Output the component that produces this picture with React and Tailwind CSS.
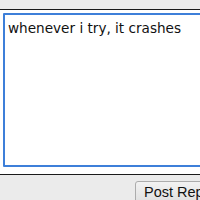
import React from 'react';

const App = () => {
    return (
        <div className="w-[200px] h-[200px] overflow-hidden bg-[#ebebeb] flex flex-col">
            <div className="h-[9px] shrink-0 bg-[#ebebeb] border-b border-[#1a1a1a] box-content" />
            <div className="h-[161px] shrink-0 bg-white border-b border-[#1a1a1a] box-content pt-[3px] pl-[3px]">
                <textarea
                    defaultValue="whenever i try, it crashes"
                    className="block w-[260px] h-[154px] resize-none border-2 border-[#3d7fd9] rounded-[1px] px-[3px] pt-[5px] text-[13.6px] leading-[17px] text-[#111] outline-none"
                    style={{ fontFamily: '"DejaVu Sans", Verdana, sans-serif' }}
                />
            </div>
            <div className="pt-[4px] pl-[135px] whitespace-nowrap">
                <button
                    className="h-[22px] w-[90px] text-left pl-[8px] border border-[#acacac] rounded-[3px] bg-gradient-to-b from-[#f2f2f2] to-[#e0e0e0] text-[14.5px] text-[#111] leading-none"
                    style={{ fontFamily: '"Liberation Sans", Arial, sans-serif' }}
                >
                    Post Reply
                </button>
            </div>
        </div>
    );
};

export default App;
